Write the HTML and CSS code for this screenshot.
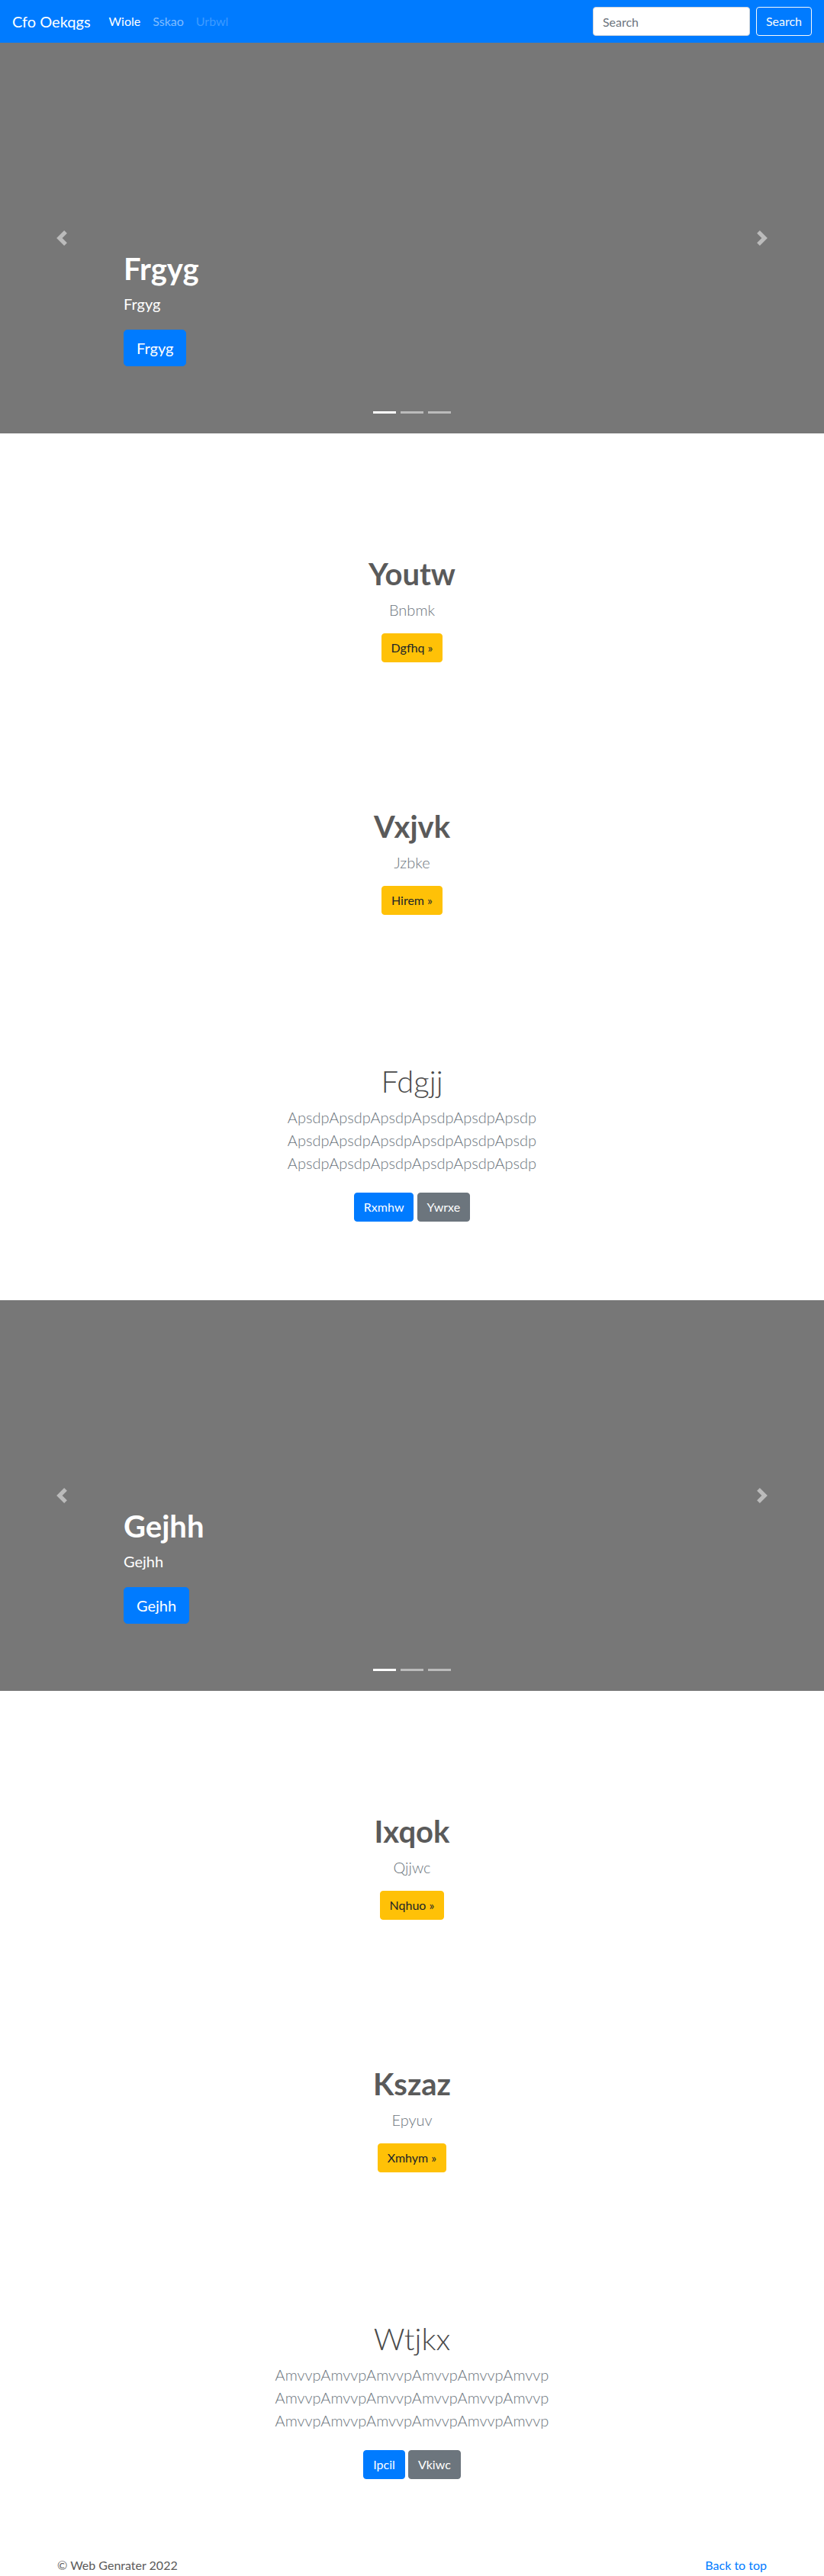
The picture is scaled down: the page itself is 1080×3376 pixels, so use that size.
FILE: index.html
```html
<!DOCTYPE html>
<html lang="en">
<head>
<meta charset="utf-8">
<title>Cfo Oekqgs</title>
<link rel="stylesheet" href="styles.css">
</head>
<body>
<nav class="navbar">
  <a class="brand" href="#">Cfo Oekqgs</a>
  <ul class="nav">
    <li><a class="nav-link active" href="#">Wiole</a></li>
    <li><a class="nav-link" href="#">Sskao</a></li>
    <li><a class="nav-link disabled" href="#">Urbwl</a></li>
  </ul>
  <form class="search">
    <input class="search-input" type="search" placeholder="Search">
    <button class="btn btn-outline-light" type="button">Search</button>
  </form>
</nav>

<main>
  <section class="carousel">
    <div class="slide">
      <h1 class="caption-title">Frgyg</h1>
      <p class="caption-text">Frgyg</p>
      <a class="btn btn-lg btn-primary" href="#">Frgyg</a>
    </div>
    <a class="control control-prev" href="#" aria-label="Previous">
      <svg width="20" height="20" viewBox="0 0 8 8"><path fill="#fff" d="M5.25 0l-4 4 4 4 1.5-1.5L4.25 4l2.5-2.5L5.25 0z"/></svg>
    </a>
    <a class="control control-next" href="#" aria-label="Next">
      <svg width="20" height="20" viewBox="0 0 8 8"><path fill="#fff" d="M2.75 0l-1.5 1.5L3.75 4l-2.5 2.5L2.75 8l4-4-4-4z"/></svg>
    </a>
    <ol class="indicators"><li class="active"></li><li></li><li></li></ol>
  </section>

  <section class="feature">
    <h1 class="feature-title">Youtw</h1>
    <p class="lead">Bnbmk</p>
    <p class="actions"><a class="btn btn-warning" href="#">Dgfhq &raquo;</a></p>
  </section>

  <section class="feature">
    <h1 class="feature-title">Vxjvk</h1>
    <p class="lead">Jzbke</p>
    <p class="actions"><a class="btn btn-warning" href="#">Hirem &raquo;</a></p>
  </section>

  <section class="jumbo">
    <h1 class="jumbo-title">Fdgjj</h1>
    <p class="lead">ApsdpApsdpApsdpApsdpApsdpApsdp<br>ApsdpApsdpApsdpApsdpApsdpApsdp<br>ApsdpApsdpApsdpApsdpApsdpApsdp</p>
    <p class="jumbo-actions"><a class="btn btn-primary" href="#">Rxmhw</a> <a class="btn btn-secondary" href="#">Ywrxe</a></p>
  </section>

  <section class="carousel carousel-gap">
    <div class="slide">
      <h1 class="caption-title">Gejhh</h1>
      <p class="caption-text">Gejhh</p>
      <a class="btn btn-lg btn-primary" href="#">Gejhh</a>
    </div>
    <a class="control control-prev" href="#" aria-label="Previous">
      <svg width="20" height="20" viewBox="0 0 8 8"><path fill="#fff" d="M5.25 0l-4 4 4 4 1.5-1.5L4.25 4l2.5-2.5L5.25 0z"/></svg>
    </a>
    <a class="control control-next" href="#" aria-label="Next">
      <svg width="20" height="20" viewBox="0 0 8 8"><path fill="#fff" d="M2.75 0l-1.5 1.5L3.75 4l-2.5 2.5L2.75 8l4-4-4-4z"/></svg>
    </a>
    <ol class="indicators"><li class="active"></li><li></li><li></li></ol>
  </section>

  <section class="feature">
    <h1 class="feature-title">Ixqok</h1>
    <p class="lead">Qjjwc</p>
    <p class="actions"><a class="btn btn-warning" href="#">Nqhuo &raquo;</a></p>
  </section>

  <section class="feature">
    <h1 class="feature-title">Kszaz</h1>
    <p class="lead">Epyuv</p>
    <p class="actions"><a class="btn btn-warning" href="#">Xmhym &raquo;</a></p>
  </section>

  <section class="jumbo">
    <h1 class="jumbo-title">Wtjkx</h1>
    <p class="lead">AmvvpAmvvpAmvvpAmvvpAmvvpAmvvp<br>AmvvpAmvvpAmvvpAmvvpAmvvpAmvvp<br>AmvvpAmvvpAmvvpAmvvpAmvvpAmvvp</p>
    <p class="jumbo-actions"><a class="btn btn-primary" href="#">Ipcil</a> <a class="btn btn-secondary" href="#">Vkiwc</a></p>
  </section>
</main>

<footer class="footer">
  <p class="copy">&copy; Web Genrater 2022</p>
  <p class="back"><a href="#">Back to top</a></p>
</footer>
</body>
</html>
```

FILE: styles.css
```css
* { box-sizing: border-box; }

html, body { margin: 0; padding: 0; }

body {
  font-family: Lato, "Open Sans", sans-serif;
  font-size: 16px;
  line-height: 24px;
  color: #5a5a5a;
  background: #fff;
}

a { text-decoration: none; }

/* Navbar */
.navbar {
  height: 56px;
  background: #007bff;
  display: flex;
  align-items: center;
  padding: 8px 16px;
}
.brand {
  color: #fff;
  font-size: 20px;
  line-height: 30px;
  margin-right: 16px;
}
.nav {
  display: flex;
  list-style: none;
  margin: 0;
  padding: 0;
}
.nav-link {
  display: block;
  padding: 8px;
  font-size: 16px;
  line-height: 24px;
  color: rgba(255, 255, 255, 0.5);
}
.nav-link.active { color: #fff; }
.nav-link.disabled { color: rgba(255, 255, 255, 0.25); }

.search {
  margin-left: auto;
  display: flex;
  align-items: center;
  gap: 8px;
}
.search-input {
  width: 206px;
  height: 38px;
  padding: 6px 12px;
  font-family: inherit;
  font-size: 16px;
  line-height: 24px;
  color: #495057;
  background: #fff;
  border: 1px solid #ced4da;
  border-radius: 4px;
  outline: none;
}
.search-input::placeholder { color: #6c757d; }

/* Buttons */
.btn {
  display: inline-block;
  font-family: inherit;
  font-size: 16px;
  line-height: 24px;
  padding: 6px 12px;
  border: 1px solid transparent;
  border-radius: 4px;
  text-align: center;
  vertical-align: middle;
  cursor: pointer;
}
.btn-lg {
  font-size: 20px;
  line-height: 30px;
  padding: 8px 16px;
  border-radius: 5px;
}
.btn-primary { background: #007bff; border-color: #007bff; color: #fff; }
.btn-secondary { background: #6c757d; border-color: #6c757d; color: #fff; }
.btn-warning { background: #ffc107; border-color: #ffc107; color: #212529; }
.btn-outline-light { background: transparent; border-color: #f8f9fa; color: #f8f9fa; }

/* Carousel */
.carousel {
  position: relative;
  height: 512px;
  background: #777;
  overflow: hidden;
}
.carousel-gap { margin-top: 47px; }
.slide {
  height: 100%;
  display: flex;
  flex-direction: column;
  justify-content: flex-end;
  align-items: flex-start;
  padding: 0 15% 88px;
  color: #fff;
}
.caption-title {
  margin: 0 0 7px;
  font-size: 40px;
  line-height: 48px;
  font-weight: 700;
  color: #fff;
}
.caption-text {
  margin: 0 0 19px;
  font-size: 20px;
  line-height: 30px;
}
.control {
  position: absolute;
  top: 0;
  bottom: 0;
  width: 15%;
  display: flex;
  align-items: center;
  justify-content: center;
  opacity: 0.5;
}
.control svg { display: block; }
.control-prev { left: 0; }
.control-next { right: 0; }
.indicators {
  position: absolute;
  left: 0;
  right: 0;
  bottom: 26px;
  display: flex;
  justify-content: center;
  list-style: none;
  margin: 0;
  padding: 0;
}
.indicators li {
  width: 30px;
  height: 3px;
  margin: 0 3px;
  background: #fff;
  opacity: 0.5;
}
.indicators li.active { opacity: 1; }

/* Feature blocks */
.feature {
  text-align: center;
  padding: 160px 0 31px;
}
.feature-title {
  margin: 0 0 8px;
  font-size: 40px;
  line-height: 48px;
  font-weight: 700;
  color: #5a5a5a;
}
.lead {
  margin: 0 0 16px;
  font-size: 20px;
  line-height: 30px;
  font-weight: 300;
  color: #6c757d;
}
.actions { margin: 0; }

/* Jumbotron blocks */
.jumbo {
  text-align: center;
  padding: 163px 0 48px;
}
.jumbo-title {
  margin: 0 0 8px;
  font-size: 40px;
  line-height: 48px;
  font-weight: 300;
  color: #4a4a4a;
}
.jumbo-actions { margin: 0; }
.jumbo-actions .btn { margin: 8px 0; }

/* Footer */
.footer {
  width: 960px;
  margin: 45px auto 0;
  padding: 0 15px;
  display: flex;
  justify-content: space-between;
  color: #5a5a5a;
}
.footer p { margin: 0 0 16px; }
.footer a { color: #007bff; }
```
